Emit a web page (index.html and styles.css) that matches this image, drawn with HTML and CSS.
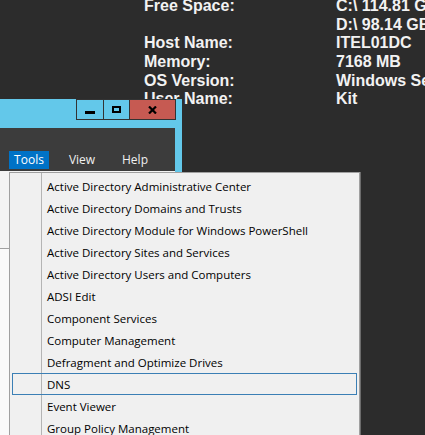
FILE: index.html
```html
<!DOCTYPE html>
<html lang="en">
<head>
    <meta charset="UTF-8">
    <title>Server Manager - Tools</title>
    <link rel="stylesheet" href="styles.css">
</head>
<body>

    <div class="sysinfo">
        <span>Free Space:</span><span>C:\ 114.81 GB</span>
        <span></span><span>D:\ 98.14 GB</span>
        <span>Host Name:</span><span>ITEL01DC</span>
        <span>Memory:</span><span>7168 MB</span>
        <span>OS Version:</span><span>Windows Server 2012 R2</span>
        <span>User Name:</span><span>Kit</span>
    </div>

    <div class="window">
        <div class="titlebar">
            <div class="title-btn btn-min"><span class="min-bar"></span></div>
            <div class="title-btn btn-max"><span class="max-box"></span></div>
            <div class="title-btn btn-close">
                <svg width="9" height="8" viewBox="0 0 9 8">
                    <path d="M1 0.5 L8 7.5 M8 0.5 L1 7.5" stroke="#000" stroke-width="2.2" fill="none"/>
                </svg>
            </div>
        </div>
        <div class="frame">
            <div class="menubar">
                <span class="menu-item active">Tools</span>
                <span class="menu-item">View</span>
                <span class="menu-item">Help</span>
            </div>
            <div class="content">
                <div class="content-top"></div>
            </div>
        </div>
    </div>

    <ul class="dropdown">
        <li>Active Directory Administrative Center</li>
        <li>Active Directory Domains and Trusts</li>
        <li>Active Directory Module for Windows PowerShell</li>
        <li>Active Directory Sites and Services</li>
        <li>Active Directory Users and Computers</li>
        <li>ADSI Edit</li>
        <li>Component Services</li>
        <li>Computer Management</li>
        <li>Defragment and Optimize Drives</li>
        <li class="hover">DNS</li>
        <li>Event Viewer</li>
        <li>Group Policy Management</li>
    </ul>

</body>
</html>
```

FILE: styles.css
```css
html, body {
    margin: 0;
    padding: 0;
}
body {
    background-color: #2c2c2c;
    width: 425px;
    height: 435px;
    overflow: hidden;
    position: relative;
    font-family: "Open Sans", "Noto Sans", sans-serif;
}

/* desktop info (bginfo style) */
.sysinfo {
    display: grid;
    grid-template-columns: 192px max-content;
    padding-left: 144px;
    margin-top: -3px;
    font-family: "Liberation Sans", Arial, sans-serif;
    font-weight: bold;
    font-size: 16px;
    line-height: 18.67px;
    color: #f2f2f2;
    white-space: nowrap;
}

/* server manager window */
.window {
    position: absolute;
    left: 0;
    top: 99px;
    width: 182px;
    height: 336px;
    background-color: #63c8ea;
    display: flex;
    flex-direction: column;
}
.titlebar {
    height: 29px;
    display: flex;
    justify-content: flex-end;
    align-items: flex-start;
    padding-right: 6px;
}
.title-btn {
    height: 19px;
    border: 1px solid #333;
    margin-left: -1px;
    display: flex;
    align-items: center;
    justify-content: center;
}
.btn-min {
    width: 26px;
}
.btn-max {
    width: 25px;
}
.btn-close {
    width: 45px;
    background-color: #c65a52;
}
.min-bar {
    width: 10px;
    height: 3px;
    background: #000;
    margin-top: 5px;
}
.max-box {
    width: 5px;
    height: 3px;
    border: 2px solid #000;
}
.frame {
    flex: 1;
    margin-right: 7px;
    background-color: #3c3c3c;
    display: flex;
    flex-direction: column;
}
.menubar {
    height: 20px;
    padding: 23px 0 0 9px;
    display: flex;
    gap: 13px;
}
.menu-item {
    width: 40px;
    height: 18px;
    line-height: 18px;
    text-align: center;
    font-size: 12px;
    color: #f0f0f0;
}
.menu-item.active {
    background-color: #0072c6;
    color: #fff;
}
.content {
    flex: 1;
    background-color: #fafafa;
}
.content-top {
    height: 77px;
    background-color: #f4f4f4;
    border-bottom: 1px solid #a0a0a0;
}

/* tools drop-down */
.dropdown {
    position: absolute;
    left: 9px;
    top: 172px;
    width: 345px;
    margin: 0;
    padding: 2px;
    list-style: none;
    background-color: #f0f0f0;
    background-image: linear-gradient(to right, transparent 31px, #b4b4b4 31px, #b4b4b4 32px, transparent 32px);
    border: 1px solid #a0a0a0;
    box-shadow: 1px 0 0 #6c6c6c;
}
.dropdown li {
    height: 22px;
    line-height: 23px;
    padding-left: 35px;
    font-size: 11.5px;
    color: #000;
    white-space: nowrap;
    box-sizing: border-box;
}
.dropdown li.hover {
    border: 1px solid #3b7fb5;
    padding-left: 34px;
    line-height: 21px;
}
```
